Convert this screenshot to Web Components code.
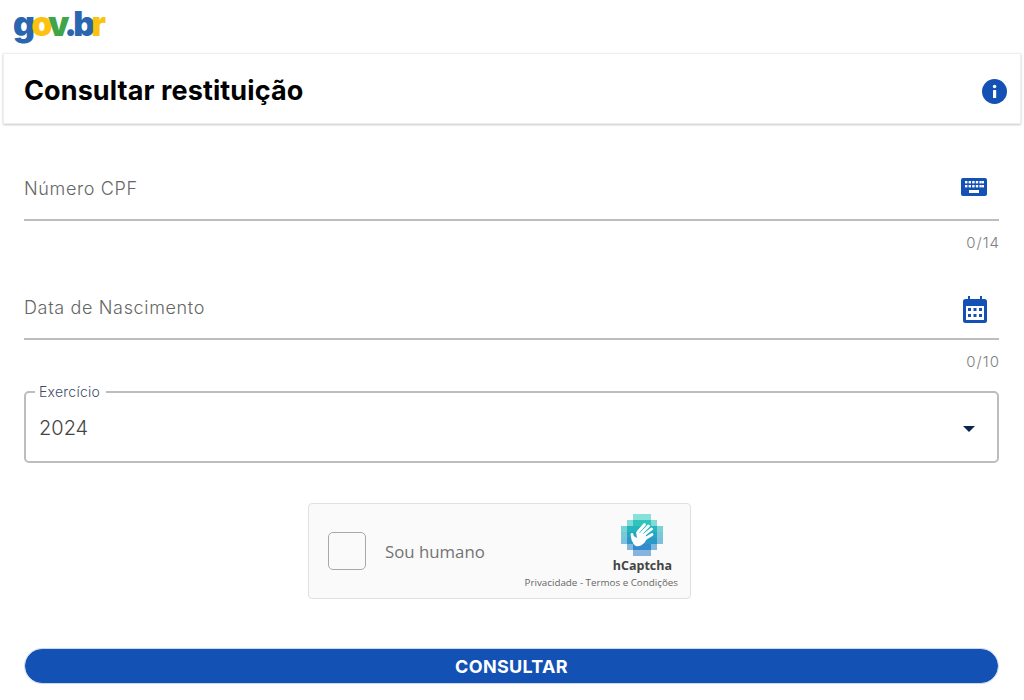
<!DOCTYPE html>
<html lang="pt-BR">
<head>
<meta charset="utf-8">
<title>Consultar restituição</title>
<style>
  html, body { margin: 0; padding: 0; background: #fff; }
  body { font-family: "Inter", "Open Sans", sans-serif; width: 1024px; height: 700px; overflow: hidden; }
  .form { display: block; padding: 11px 25px 0 24px; }
</style>
</head>
<body>
<gov-logo></gov-logo>
<title-card>Consultar restituição</title-card>
<div class="form">
  <text-field label="Número CPF" counter="0/14" icon="keyboard"></text-field>
  <text-field label="Data de Nascimento" counter="0/10" icon="calendar"></text-field>
  <select-field label="Exercício" value="2024"></select-field>
  <captcha-box></captcha-box>
  <submit-button>CONSULTAR</submit-button>
</div>
<script>
const ICONS = {
  keyboard: `<svg width="26" height="18" viewBox="0 0 26 18" style="margin-bottom:-2px"><rect width="26" height="18" rx="2" fill="#1351b4"/>
    <g fill="#fff">
      <rect x="4" y="3" width="2.4" height="2.4"/><rect x="7.6" y="3" width="2.4" height="2.4"/><rect x="11.2" y="3" width="2.4" height="2.4"/><rect x="14.8" y="3" width="2.4" height="2.4"/><rect x="18.4" y="3" width="2.4" height="2.4"/><rect x="21" y="3" width="2" height="2.4"/>
      <rect x="4" y="7" width="2.4" height="2.4"/><rect x="7.6" y="7" width="2.4" height="2.4"/><rect x="11.2" y="7" width="2.4" height="2.4"/><rect x="14.8" y="7" width="2.4" height="2.4"/><rect x="18.4" y="7" width="2.4" height="2.4"/><rect x="21" y="7" width="2" height="2.4"/>
      <rect x="8" y="12" width="10" height="3"/>
    </g></svg>`,
  calendar: `<svg width="24" height="27" viewBox="0 0 24 27" style="margin-bottom:-10px"><path d="M5 0h2v3h10V0h2v3h2.5A2.5 2.5 0 0 1 24 5.500v19a2.500 2.500 0 0 1-2.500 2.500h-19A2.500 2.500 0 0 1 0 24.500v-19A2.500 2.500 0 0 1 2.500 3H5z" fill="#1351b4"/>
    <rect x="3" y="10" width="18" height="14" fill="#fff"/>
    <g fill="#1351b4">
      <rect x="5" y="12" width="3" height="3"/><rect x="10.500" y="12" width="3" height="3"/><rect x="16" y="12" width="3" height="3"/>
      <rect x="5" y="18" width="3" height="3"/><rect x="10.500" y="18" width="3" height="3"/><rect x="16" y="18" width="3" height="3"/>
    </g></svg>`
};

class GovLogo extends HTMLElement {
  connectedCallback() {
    this.attachShadow({ mode: 'open' });
    this.shadowRoot.innerHTML = `
      <style>
        :host { display: block; height: 53px; padding-left: 13px; box-sizing: border-box; }
        .logo { display: inline-block; font: 900 34px/48px "Inter", sans-serif; letter-spacing: -3.900px; }
        .b { color: #2a65b0; } .y { color: #fdc20f; } .g { color: #3fa648; }
      </style>
      <span class="logo"><span class="b">g</span><span class="y">o</span><span class="g">v</span><span class="b">.</span><span class="b">b</span><span class="y">r</span></span>`;
  }
}
customElements.define('gov-logo', GovLogo);

class TitleCard extends HTMLElement {
  connectedCallback() {
    this.attachShadow({ mode: 'open' });
    this.shadowRoot.innerHTML = `
      <style>
        :host {
          display: flex; align-items: center; justify-content: space-between;
          height: 71px; box-sizing: border-box; margin: 0 3px;
          padding: 0 13px 0 20px; border: 1px solid #eee; box-shadow: 0 1px 2px #c8c8c8;
        }
        h1 { margin: 4px 0 0; font: 700 27px/1 "Inter", sans-serif; letter-spacing: 0.1px; color: #000; }
        svg { display: block; margin-top: 6px; }
      </style>
      <h1><slot></slot></h1>
      <svg width="25" height="25" viewBox="0 0 25 25"><circle cx="12.500" cy="12.500" r="12.500" fill="#1351b4"/><rect x="11" y="11" width="3.200" height="8" rx="0.500" fill="#fff"/><circle cx="12.600" cy="7.500" r="1.800" fill="#fff"/></svg>`;
  }
}
customElements.define('title-card', TitleCard);

class TextField extends HTMLElement {
  connectedCallback() {
    this.attachShadow({ mode: 'open' });
    this.shadowRoot.innerHTML = `
      <style>
        :host { display: block; }
        .input {
          height: 86px; box-sizing: border-box; border-bottom: 2px solid #bdbdbd;
          display: flex; justify-content: space-between; align-items: flex-end; padding: 0 12px 20px 0;
        }
        .label { font-size: 18px; font-weight: 300; line-height: 22px; letter-spacing: 0.65px; color: #666; margin-bottom: -1px; }
        .icon { height: 27px; display: flex; align-items: center; }
        .counter { height: 33px; text-align: right; font-size: 15px; font-weight: 300; line-height: 15px; letter-spacing: 1px; margin-right: -1px; padding-top: 14px; box-sizing: border-box; color: #808080; }
      </style>
      <div class="input"><span class="label">${this.getAttribute('label')}</span><span class="icon">${ICONS[this.getAttribute('icon')]}</span></div>
      <div class="counter">${this.getAttribute('counter')}</div>`;
  }
}
customElements.define('text-field', TextField);

class SelectField extends HTMLElement {
  connectedCallback() {
    this.attachShadow({ mode: 'open' });
    this.shadowRoot.innerHTML = `
      <style>
        :host { display: block; margin-top: 10px; }
        fieldset {
          margin: 0; padding: 0 22px 0 13px; height: 80px; box-sizing: border-box;
          border: 2px solid #bdbdbd; border-radius: 5px;
          display: flex; align-items: center; justify-content: space-between;
        }
        legend { padding: 0 6px 0 4px; margin-left: -4px; font-size: 14px; font-weight: 300; line-height: 17px; letter-spacing: 0.25px; color: #3f4d6d; }
        .value { font-size: 20px; font-weight: 300; line-height: 24px; color: #444; margin-top: -6px; }
        .arrow { width: 0; height: 0; border: 6px solid transparent; border-top-color: #0c2352; border-bottom: 0; margin-top: -4px; }
      </style>
      <fieldset>
        <legend>${this.getAttribute('label')}</legend>
        <span class="value">${this.getAttribute('value')}</span>
        <span class="arrow"></span>
      </fieldset>`;
  }
}
customElements.define('select-field', SelectField);

class CaptchaBox extends HTMLElement {
  connectedCallback() {
    this.attachShadow({ mode: 'open' });
    // the hCaptcha mark is a pixel diamond, teal at the top going to blue
    const rows = [[2, 3], [1, 5], [0, 7], [0, 7], [0, 7], [1, 5], [2, 3]];
    const colors = ['#3bd0c2', '#30c4bd', '#26b5bc', '#24a5c0', '#2a98c8', '#328ccb', '#3a86cc'];
    let cells = '';
    rows.forEach(([start, n], y) => {
      for (let x = start; x < start + n; x++) {
        const edge = x === start || x === start + n - 1 || y === 0 || y === 6;
        cells += `<rect x="${x * 6}" y="${y * 6}" width="6" height="6" fill="${colors[y]}" opacity="${edge ? 0.6 : 1}"/>`;
      }
    });
    this.shadowRoot.innerHTML = `
      <style>
        :host {
          display: flex; align-items: center; justify-content: space-between;
          width: 383px; height: 96px; box-sizing: border-box;
          margin: 40px 0 0 284px; padding: 0 12px 0 19px;
          background: #fafafa; border: 1px solid #e0e0e0; border-radius: 4px;
          font-family: "Open Sans", sans-serif;
        }
        .left { display: flex; align-items: center; gap: 19px; }
        .box { width: 36px; height: 36px; border: 1px solid #a8a8a8; border-radius: 5px; }
        .text { font-size: 16.800px; color: #737373; }
        .right { display: flex; flex-direction: column; align-items: flex-end; margin-top: 1px; }
        .mark { display: flex; flex-direction: column; align-items: center; margin-right: 6px; }
        svg { display: block; }
        .brand { font-size: 12.500px; line-height: 16px; font-weight: 700; color: #444; margin-top: 2px; }
        .links { font-size: 9.800px; line-height: 14px; color: #666; margin-top: 2px; }
      </style>
      <div class="left"><div class="box"></div><span class="text">Sou humano</span></div>
      <div class="right">
        <div class="mark">
          <svg width="42" height="42" viewBox="0 0 42 42">${cells}
            <g stroke="#fff" stroke-width="2.800" stroke-linecap="round" fill="none">
              <path d="M17 18 L23.500 10.500"/><path d="M20.500 19 L27.500 12"/><path d="M23 21 L30.500 15"/><path d="M24.500 24.500 L31 20.500"/><path d="M12 26 L11 20.500"/>
            </g>
            <path d="M11 21 L16 24 L15 18 L24 20 L26 24 C24 30 19 33 15 32 C12 31 10.500 26 11 21 Z" fill="#fff"/>
          </svg>
          <span class="brand">hCaptcha</span>
        </div>
        <span class="links">Privacidade - Termos e Condições</span>
      </div>`;
  }
}
customElements.define('captcha-box', CaptchaBox);

class SubmitButton extends HTMLElement {
  connectedCallback() {
    this.attachShadow({ mode: 'open' });
    this.shadowRoot.innerHTML = `
      <style>
        :host { display: block; margin-top: 49px; }
        button {
          display: block; width: 100%; height: 36px; padding: 2px 0 0; box-sizing: border-box;
          background: #1351b4; background-clip: padding-box; color: #fff; border: 1px solid #c9d8ef; border-radius: 18px;
          font: 700 18px/1 "Inter", sans-serif; letter-spacing: 0.3px;
        }
      </style>
      <button type="button"><slot></slot></button>`;
  }
}
customElements.define('submit-button', SubmitButton);
</script>
</body>
</html>
